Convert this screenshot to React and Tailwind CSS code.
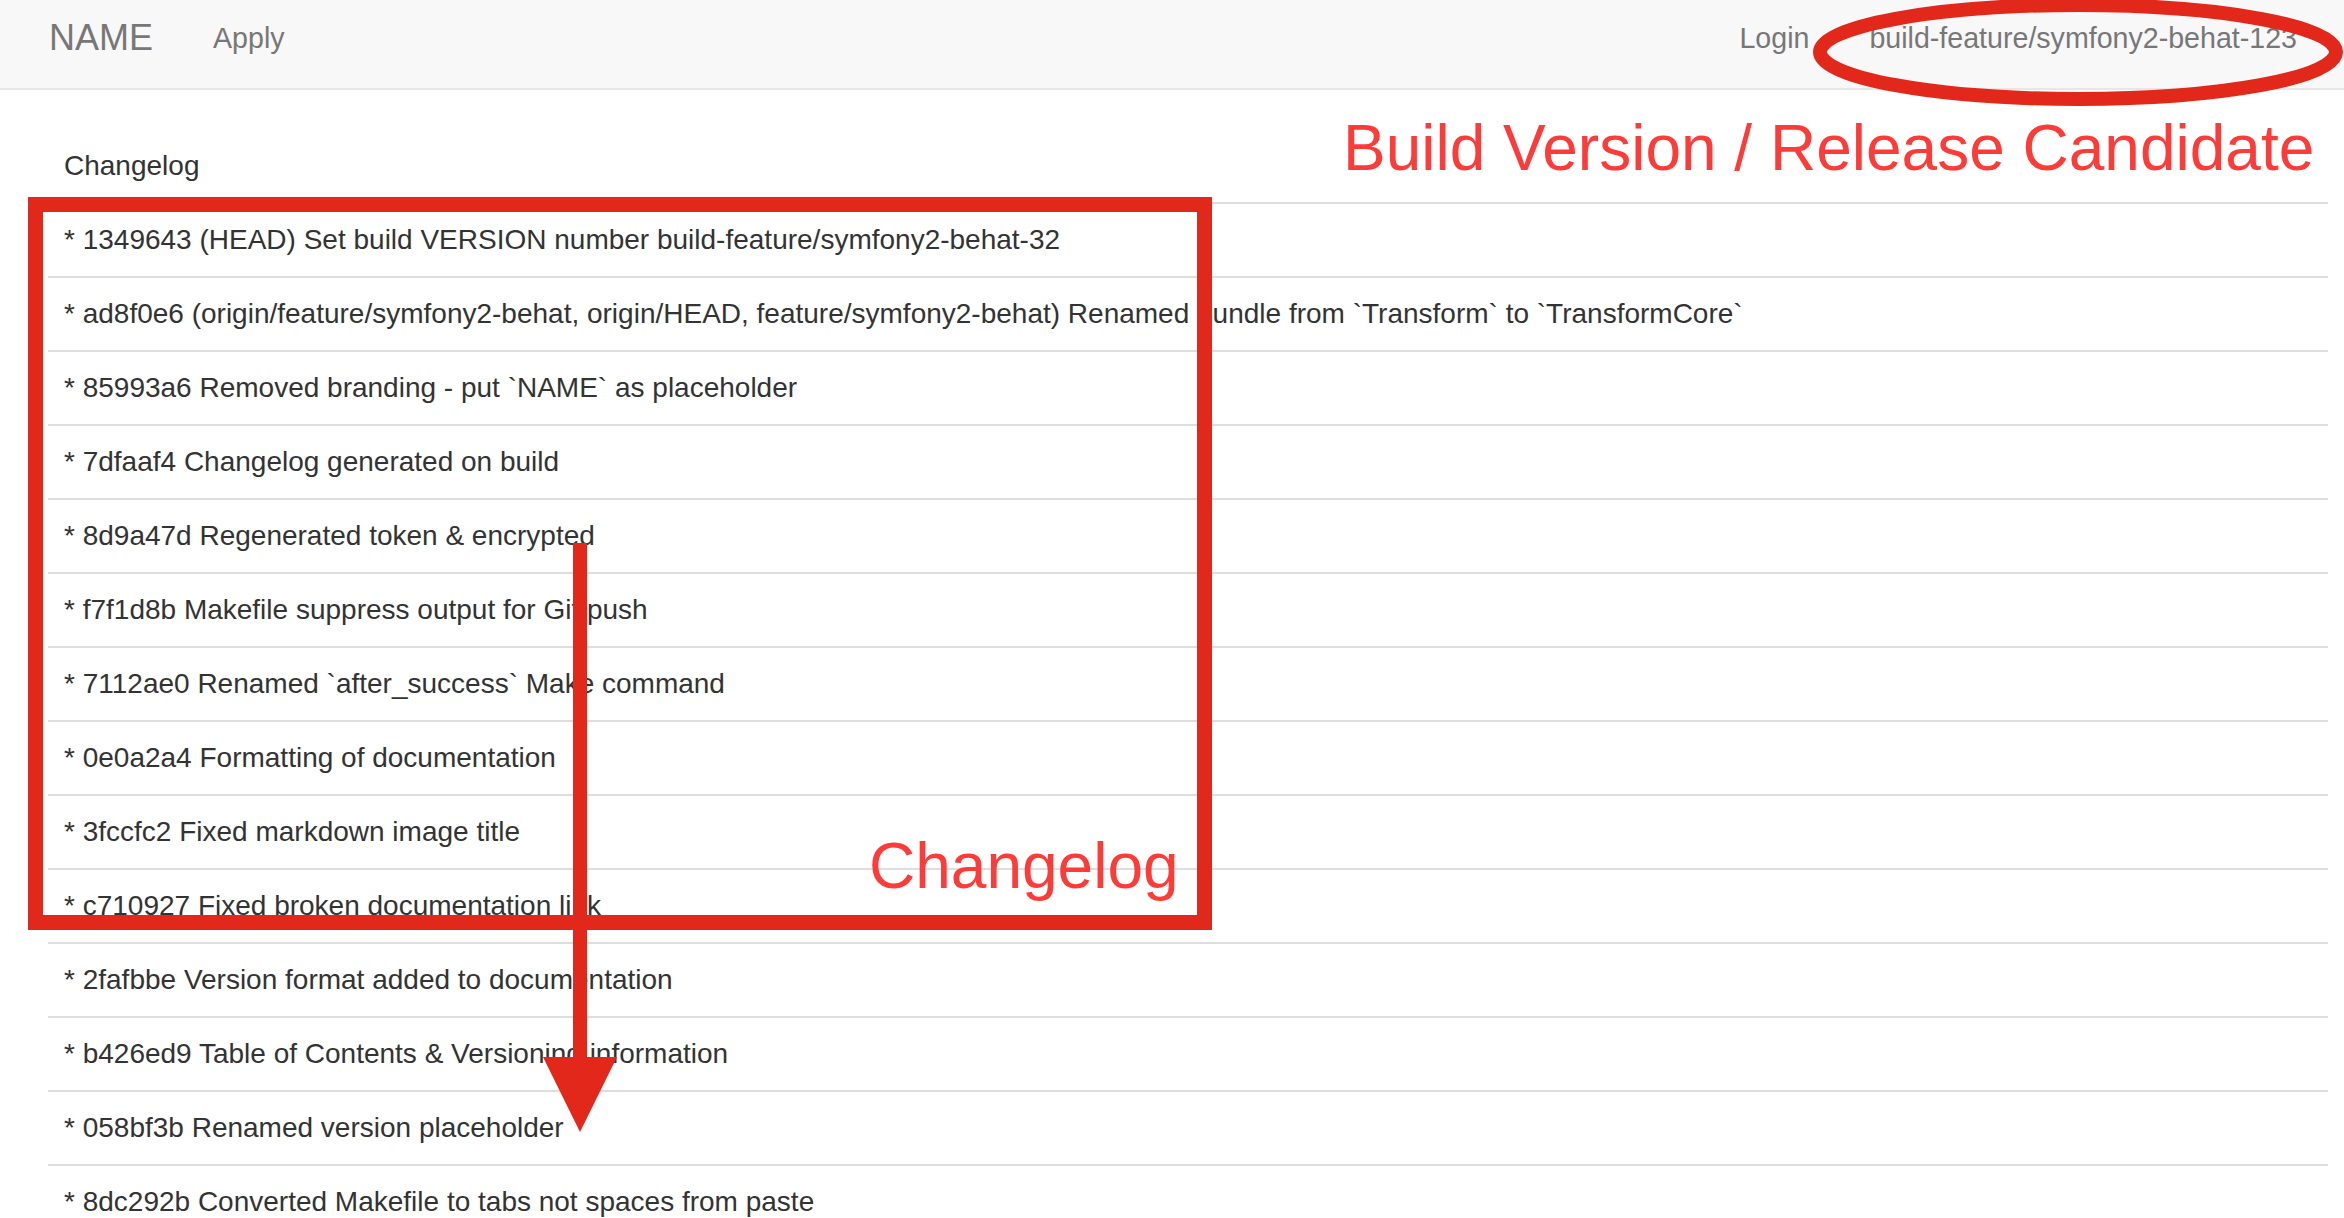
const commits = [
  '* 1349643 (HEAD) Set build VERSION number build-feature/symfony2-behat-32',
  '* ad8f0e6 (origin/feature/symfony2-behat, origin/HEAD, feature/symfony2-behat) Renamed bundle from `Transform` to `TransformCore`',
  '* 85993a6 Removed branding - put `NAME` as placeholder',
  '* 7dfaaf4 Changelog generated on build',
  '* 8d9a47d Regenerated token & encrypted',
  '* f7f1d8b Makefile suppress output for Git push',
  '* 7112ae0 Renamed `after_success` Make command',
  '* 0e0a2a4 Formatting of documentation',
  '* 3fccfc2 Fixed markdown image title',
  '* c710927 Fixed broken documentation link',
  '* 2fafbbe Version format added to documentation',
  '* b426ed9 Table of Contents & Versioning information',
  '* 058bf3b Renamed version placeholder',
  '* 8dc292b Converted Makefile to tabs not spaces from paste',
];

function Navbar() {
  return (
    <nav className="h-[90px] bg-[#f8f8f8] border-b-2 border-[#e7e7e7] flex items-start justify-between pl-[19px] pr-[17px] text-[#777]">
      <div className="flex items-start">
        <a href="#" className="px-[30px] pt-[18px] text-[36px] leading-[40px]">NAME</a>
        <a href="#" className="px-[30px] pt-[18px] text-[28.6px] leading-[40px]">Apply</a>
      </div>
      <div className="flex items-start">
        <a href="#" className="px-[30px] pt-[18px] text-[28.6px] leading-[40px]">Login</a>
        <a href="#" className="px-[30px] pt-[18px] text-[28.6px] leading-[40px]">build-feature/symfony2-behat-123</a>
      </div>
    </nav>
  );
}

function Changelog() {
  return (
    <div className="mt-[40px] ml-[48px] mr-[16px]">
      <div className="border-b-2 border-[#ddd] p-[16px] text-[28px] leading-[40px]">Changelog</div>
      {commits.map((c) => (
        <div key={c} className="border-b-2 border-[#ddd] p-[16px] text-[28px] leading-[40px] whitespace-nowrap">
          {c}
        </div>
      ))}
    </div>
  );
}

// red annotations drawn over the screenshot
function Annotations() {
  return (
    <div className="absolute inset-0 pointer-events-none">
      <svg className="absolute inset-0" width="2344" height="1218" viewBox="0 0 2344 1218">
        <ellipse cx="2078" cy="52" rx="258" ry="47" fill="none" stroke="#e1281a" strokeWidth="14" />
        <rect x="35.5" y="204.5" width="1169" height="718" fill="none" stroke="#e1281a" strokeWidth="15" />
        <rect x="573" y="543" width="14" height="516" fill="#e1281a" />
        <polygon points="543,1057 617,1057 580,1132" fill="#e1281a" />
      </svg>
      <div className="absolute left-[1343px] top-[116px] text-[64px] leading-[64px] text-[#fd3c3a] whitespace-nowrap">
        Build Version / Release Candidate
      </div>
      <div className="absolute left-[869px] top-[834px] text-[64px] leading-[64px] text-[#fd3c3a] whitespace-nowrap">
        Changelog
      </div>
    </div>
  );
}

export default function App() {
  return (
    <div className="relative w-[2344px] h-[1218px] overflow-hidden bg-white text-[#333] font-['Liberation_Sans',Arial,sans-serif]">
      <Navbar />
      <Changelog />
      <Annotations />
    </div>
  );
}
